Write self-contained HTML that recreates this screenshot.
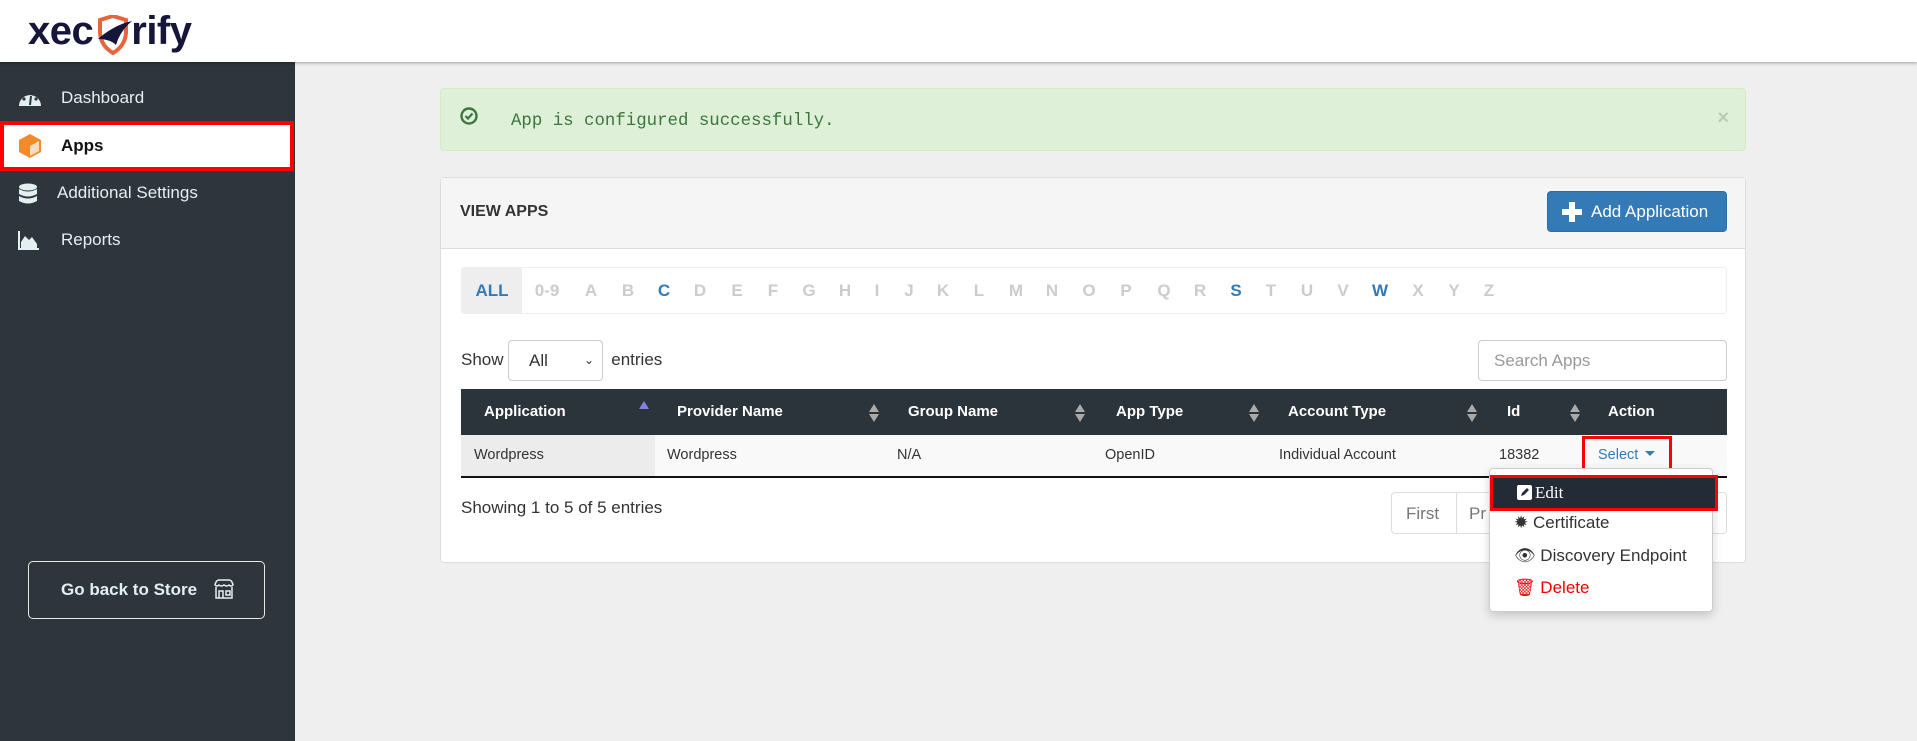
<!DOCTYPE html>
<html><head><meta charset="utf-8"><style>
*{box-sizing:border-box;margin:0;padding:0}
body{width:1917px;height:741px;overflow:hidden;background:#efefef;font-family:"Liberation Sans",Arial,sans-serif;position:relative}
.hdr{position:absolute;left:0;top:0;width:1917px;height:62px;background:#fff;box-shadow:0 1px 3px rgba(0,0,0,.35);z-index:3}
.logo{position:absolute;left:28px;top:9px;font-size:40px;font-weight:bold;color:#15163a;letter-spacing:-0.5px}
.side{position:absolute;left:0;top:62px;width:295px;height:679px;background:#2e353d}
.nav{position:absolute;left:0;width:295px;color:#e2f0f2;font-size:17px;height:40px;line-height:40px}
.nav svg{position:absolute;left:18px;top:10px}
.apps{background:#fff;color:#111;font-weight:bold;border:4px solid #f00;left:0;width:294px;top:59px;height:50px;line-height:42px}
.store{position:absolute;left:28px;top:499px;width:237px;height:58px;border:1.5px solid #e8e8e8;border-radius:5px;color:#e2f0f2;font-weight:bold;font-size:17px;line-height:55px;padding-left:32px}
.alert{position:absolute;left:440px;top:88px;width:1306px;height:63px;background:#dff0d8;border:1px solid #d6e9c6;border-radius:4px;color:#3c763d}
.alert .t{position:absolute;left:70px;top:23px;font-family:"Liberation Mono",monospace;font-size:17.4px}
.alert .x{position:absolute;right:16px;top:18px;color:#b9ccb4;font-size:20px;font-weight:bold}
.panel{position:absolute;left:440px;top:177px;width:1306px;height:386px;background:#fff;border:1px solid #ddd;border-radius:4px}
.ph{height:71px;background:#f5f5f5;border-bottom:1px solid #ddd;position:relative}
.ph .tt{position:absolute;left:19px;top:25px;font-weight:bold;font-size:16px;color:#333}
.btn{position:absolute;left:1106px;top:13px;width:180px;height:41px;background:#337ab7;border:1px solid #2e6da4;border-radius:4px;color:#fff;font-size:17px;line-height:39px;padding-left:43px}
.letters{position:absolute;left:20px;top:89px;width:1266px;height:47px;border:1px solid #eee;border-radius:3px}
.letters span{position:absolute;top:0;height:45px;line-height:45px;font-weight:bold;font-size:17px;color:#ccc;text-align:center;width:36px}
.letters .on{color:#337ab7}
.show{position:absolute;left:20px;top:172px;font-size:17px;color:#333}
.sel{position:absolute;left:67px;top:162px;width:95px;height:41px;border:1px solid #ccc;border-radius:4px;padding-left:20px;line-height:39px;font-size:17px;color:#333}
.search{position:absolute;left:1037px;top:162px;width:249px;height:41px;border:1px solid #ccc;border-radius:4px;padding-left:15px;line-height:39px;font-size:17px;color:#999}
.th{position:absolute;left:20px;top:211px;width:1266px;height:46px;background:#2b333b;color:#fff;font-weight:bold;font-size:15px}
.th span,.tr span{position:absolute;top:0;line-height:46px}
.th i{position:absolute;top:16px;width:8px;height:16px}
.tr{position:absolute;left:20px;top:257px;width:1266px;height:43px;background:#f9f9f9;border-bottom:2px solid #111;font-size:14.5px;color:#333}
.tr span{line-height:41px}
.foot{position:absolute;left:20px;top:320px;font-size:17px;color:#333}
.pag{position:absolute;left:950px;top:314px;width:336px;height:42px;border:1px solid #ddd;border-radius:4px;font-size:17px;color:#777}
.dd{position:absolute;left:1489px;top:468px;width:224px;height:144px;background:#fff;border:1px solid #ccc;border-radius:4px;box-shadow:0 4px 10px rgba(0,0,0,.17);font-size:17px;color:#333;z-index:5}
.dd div{position:absolute;left:24px}
</style></head><body>
<div class="hdr"><div class="logo">xec<span style="display:inline-block;width:38px"></span>rify</div>
<svg style="position:absolute;left:96px;top:15px" width="38" height="40" viewBox="0 0 38 40"><path d="M4 5 L17 1 L30 5 L30 18 Q29 31 17 38 Q5 31 4 18 Z" fill="none" stroke="#e8643a" stroke-width="4"/><path d="M2 24 Q18 10 36 6 Q24 16 20 30 Q14 24 2 24Z" fill="#15163a"/></svg></div>
<div class="side">
<div class="nav" style="top:16px;padding-left:61px"><svg width="24" height="20" viewBox="0 0 24 20"><path d="M1 18 A11 11 0 1 1 23 18 Z" fill="#e2f0f2"/><circle cx="6" cy="11" r="1.6" fill="#2e353d"/><circle cx="9" cy="6" r="1.6" fill="#2e353d"/><circle cx="15" cy="6" r="1.6" fill="#2e353d"/><circle cx="18" cy="11" r="1.6" fill="#2e353d"/><path d="M12 17 L13 8" stroke="#2e353d" stroke-width="2"/></svg>Dashboard</div>
<div class="nav apps" style="padding-left:57px"><svg style="left:14px;top:8px" width="24" height="26" viewBox="0 0 24 26"><path d="M12 1 L23 7 L23 19 L12 25 L1 19 L1 7 Z" fill="#f58a2a"/><path d="M12 13 L21 8 L21 18 L12 23 Z" fill="#fff" opacity=".7"/></svg>Apps</div>
<div class="nav" style="top:111px;padding-left:57px"><svg width="20" height="24" viewBox="0 0 20 24"><ellipse cx="10" cy="4" rx="9" ry="3.5" fill="#e2f0f2"/><path d="M1 6 Q10 11 19 6 V11 Q10 16 1 11Z M1 13 Q10 18 19 13 V18 Q10 23 1 18Z" fill="#e2f0f2"/></svg>Additional Settings</div>
<div class="nav" style="top:158px;padding-left:61px"><svg width="22" height="20" viewBox="0 0 22 20"><path d="M1 1 V19 H21" stroke="#e2f0f2" stroke-width="2" fill="none"/><path d="M3 18 L3 12 L7 6 L11 10 L14 7 L19 14 L19 18Z" fill="#e2f0f2"/></svg>Reports</div>
<div class="store">Go back to Store <svg style="position:absolute;left:184px;top:17px" width="22" height="20" viewBox="0 0 22 20" fill="none" stroke="#e2f0f2" stroke-width="1.5"><path d="M2 6 Q3 1 6 1 H16 Q19 1 20 6 Q18 8 16 6 Q14 8 11 6 Q8 8 6 6 Q4 8 2 6Z"/><path d="M3 8 V19 H19 V8 M6 19 V12 H10 V19 M13 12 H17 V16 H13Z"/></svg></div>
</div>
<div class="alert"><svg style="position:absolute;left:19px;top:18px" width="18" height="18" viewBox="0 0 18 18"><circle cx="9" cy="9" r="7.5" fill="none" stroke="#3c763d" stroke-width="2.4"/><path d="M5.5 9 L8 11.5 L12.5 6.5" fill="none" stroke="#3c763d" stroke-width="2.2"/></svg><div class="t">App is configured successfully.</div><div class="x">×</div></div>
<div class="panel">
<div class="ph"><div class="tt">VIEW APPS</div><div class="btn"><svg style="position:absolute;left:14px;top:10px" width="20" height="20" viewBox="0 0 20 20"><path d="M7 0H13V7H20V13H13V20H7V13H0V7H7Z" fill="#fff"/></svg>Add Application</div></div>
<div class="letters">
<span class="on" style="left:0;width:60px;background:#eee">ALL</span>
<span style="left:62px;width:46px">0-9</span>
<span style="left:111px">A</span><span style="left:148px">B</span><span class="on" style="left:184px">C</span><span style="left:220px">D</span><span style="left:257px">E</span><span style="left:293px">F</span><span style="left:329px">G</span><span style="left:365px">H</span><span style="left:397px">I</span><span style="left:429px">J</span><span style="left:463px">K</span><span style="left:499px">L</span><span style="left:536px">M</span><span style="left:572px">N</span><span style="left:609px">O</span><span style="left:646px">P</span><span style="left:684px">Q</span><span style="left:720px">R</span><span class="on" style="left:756px">S</span><span style="left:791px">T</span><span style="left:827px">U</span><span style="left:863px">V</span><span class="on" style="left:900px">W</span><span style="left:938px">X</span><span style="left:974px">Y</span><span style="left:1009px">Z</span>
</div>
<div class="show">Show <span style="margin-left:103px">entries</span></div>
<div class="sel">All<span style="position:absolute;right:8px;font-size:12px">&#8964;</span></div>
<div class="search">Search Apps</div>
<div class="th">
<span style="left:23px">Application</span><i style="left:178px;top:12px;width:0;height:0;border-left:5px solid transparent;border-right:5px solid transparent;border-bottom:8px solid #8a7fe0"></i>
<span style="left:216px">Provider Name</span>
<span style="left:447px">Group Name</span>
<span style="left:655px">App Type</span>
<span style="left:827px">Account Type</span>
<span style="left:1046px">Id</span>
<span style="left:1147px">Action</span>
<svg style="position:absolute;left:408px;top:15px" width="10" height="18"><path d="M5 0L10 8H0Z M5 18L0 10H10Z" fill="#aaa"/></svg>
<svg style="position:absolute;left:614px;top:15px" width="10" height="18"><path d="M5 0L10 8H0Z M5 18L0 10H10Z" fill="#aaa"/></svg>
<svg style="position:absolute;left:788px;top:15px" width="10" height="18"><path d="M5 0L10 8H0Z M5 18L0 10H10Z" fill="#aaa"/></svg>
<svg style="position:absolute;left:1006px;top:15px" width="10" height="18"><path d="M5 0L10 8H0Z M5 18L0 10H10Z" fill="#aaa"/></svg>
<svg style="position:absolute;left:1109px;top:15px" width="10" height="18"><path d="M5 0L10 8H0Z M5 18L0 10H10Z" fill="#aaa"/></svg>
</div>
<div class="tr"><div style="position:absolute;left:0;top:0;width:194px;height:41px;background:#ececec"></div>
<span style="left:13px">Wordpress</span><span style="left:206px">Wordpress</span><span style="left:436px">N/A</span><span style="left:644px">OpenID</span><span style="left:818px">Individual Account</span><span style="left:1038px">18382</span><span style="left:1137px;color:#337ab7">Select <span style="position:relative;display:inline-block;width:0;height:0;border-left:5px solid transparent;border-right:5px solid transparent;border-top:5px solid #337ab7;top:-3px;margin-left:3px"></span></span>
<div style="position:absolute;left:1121px;top:1px;width:90px;height:36px;border:3px solid #f00"></div></div>
<div class="foot">Showing 1 to 5 of 5 entries</div>
<div class="pag"><span style="position:absolute;left:14px;top:11px">First</span><div style="position:absolute;left:64px;top:0;height:40px;border-left:1px solid #ddd"></div><span style="position:absolute;left:77px;top:11px">Pr</span></div>
</div>
<div class="dd">
<div style="left:0;top:6px;width:228px;height:36px;background:#222b36;border:3px solid #f00;color:#fff;font-family:'Liberation Serif',serif;line-height:30px;padding-left:24px"><svg width="15" height="15" viewBox="0 0 15 15" style="vertical-align:-2px;margin-right:3px"><rect width="15" height="15" rx="2" fill="#fff"/><path d="M4 11 L5 8 L10 3 L12 5 L7 10 Z" fill="#222b36"/></svg>Edit</div>
<div style="top:44px">✹ Certificate</div>
<div style="top:77px">👁 Discovery Endpoint</div>
<div style="top:109px;color:#e00">🗑 Delete</div>
</div>
</body></html>
